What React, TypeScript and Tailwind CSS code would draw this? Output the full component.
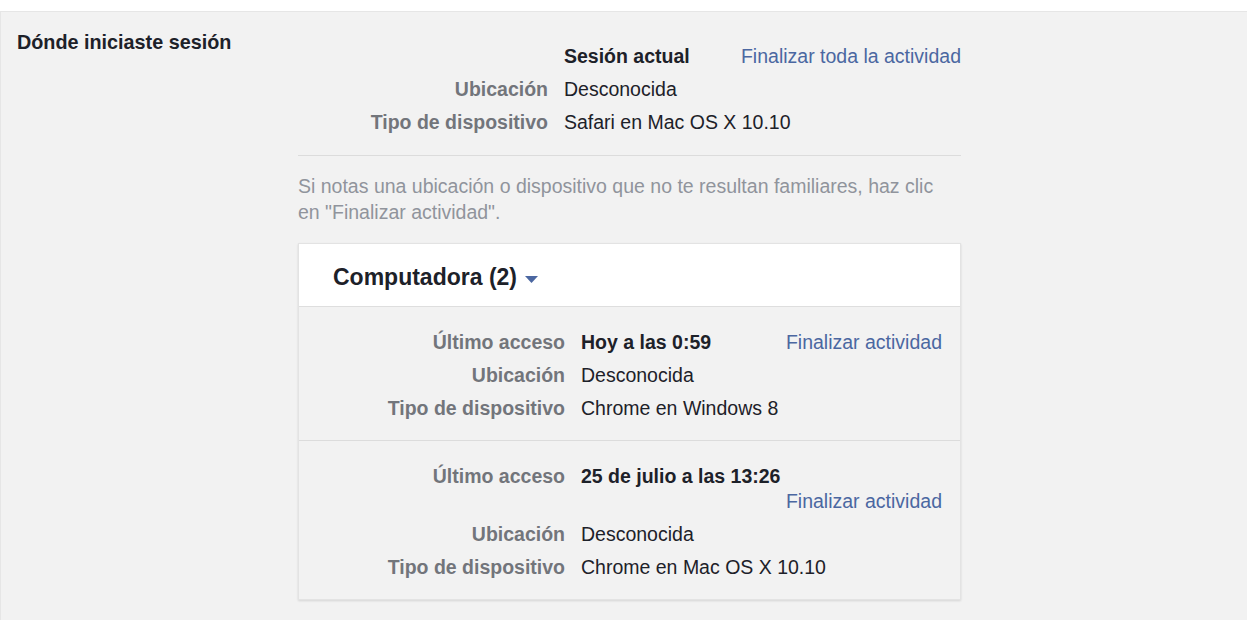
import React from 'react';

type Row = {
  label: string;
  value: string;
  bold?: boolean;
  link?: string;
};

const current: Row[] = [
  { label: '', value: 'Sesión actual', bold: true, link: 'Finalizar toda la actividad' },
  { label: 'Ubicación', value: 'Desconocida' },
  { label: 'Tipo de dispositivo', value: 'Safari en Mac OS X 10.10' },
];

const sessions: Row[][] = [
  [
    { label: 'Último acceso', value: 'Hoy a las 0:59', bold: true, link: 'Finalizar actividad' },
    { label: 'Ubicación', value: 'Desconocida' },
    { label: 'Tipo de dispositivo', value: 'Chrome en Windows 8' },
  ],
  [
    { label: 'Último acceso', value: '25 de julio a las 13:26', bold: true, link: 'Finalizar actividad' },
    { label: 'Ubicación', value: 'Desconocida' },
    { label: 'Tipo de dispositivo', value: 'Chrome en Mac OS X 10.10' },
  ],
];

const InfoRow: React.FC<{ row: Row; labelWidth: string }> = ({ row, labelWidth }) => (
  <div className="flex py-[4px] leading-[25px]">
    <div className={`${labelWidth} shrink-0 text-right font-bold text-[#72757b]`}>{row.label}</div>
    <div className="ml-[16px] flex flex-1 flex-wrap gap-x-[20px]">
      <span className={row.bold ? 'font-bold text-[#1d2129]' : 'text-[#1d2129]'}>{row.value}</span>
      {row.link && (
        <a href="#" className="ml-auto text-[#4b67a1]">
          {row.link}
        </a>
      )}
    </div>
  </div>
);

export default function App() {
  return (
    <div
      className="min-h-[620px] bg-white pt-[11px] text-[19.5px]"
      style={{ fontFamily: '"Liberation Sans", Arial, Helvetica, sans-serif' }}
    >
      <div className="flex min-h-[609px] border-t border-l border-[#e6e6e6] bg-[#f2f2f2] pt-[18px] pl-[16px]">
        {/* left heading */}
        <div className="w-[281px] shrink-0 text-[19.8px] font-bold leading-[25px] text-[#1d2129]">
          Dónde iniciaste sesión
        </div>

        {/* right column */}
        <div className="w-[663px] pt-[10px]">
          <div>
            {current.map((r, i) => (
              <InfoRow key={i} row={r} labelWidth="w-[250px]" />
            ))}
          </div>

          <div className="mt-[16px] h-px bg-[#dcdcdc]" />

          <p className="mt-[17px] w-[648px] leading-[26px] text-[#90949c]">
            Si notas una ubicación o dispositivo que no te resultan familiares, haz clic en "Finalizar actividad".
          </p>

          {/* card */}
          <div className="mt-[18px] border border-[#e3e3e3] shadow-[0_1px_2px_rgba(0,0,0,0.12)]">
            <div className="flex h-[63px] items-center border-b border-[#dedede] bg-white pt-[4px] pl-[34px]">
              <span className="text-[23px] font-bold text-[#1d2129]">Computadora (2)</span>
              <svg className="ml-[8px] mt-[4px]" width="13" height="7" viewBox="0 0 13 7">
                <path d="M0 0h13L6.5 7z" fill="#4b67a1" />
              </svg>
            </div>
            <div className="bg-[#f2f2f2]">
              {sessions.map((s, i) => (
                <div
                  key={i}
                  className={`pt-[19px] pb-[15px] pr-[18px] ${i > 0 ? 'border-t border-[#dcdcdc]' : ''}`}
                >
                  {s.map((r, j) => (
                    <InfoRow key={j} row={r} labelWidth="w-[266px]" />
                  ))}
                </div>
              ))}
            </div>
          </div>
        </div>
      </div>
    </div>
  );
}
